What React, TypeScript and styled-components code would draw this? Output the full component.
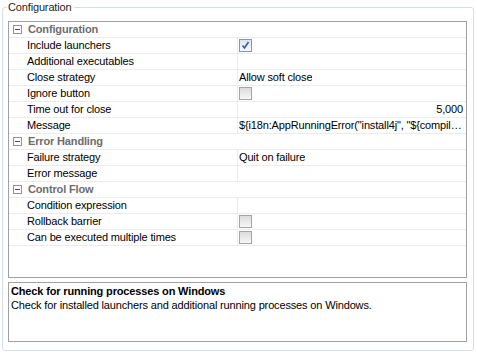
import React from 'react';
import styled, {createGlobalStyle} from "styled-components";

type Row =
    | {kind: 'group', label: string}
    | {kind: 'prop', label: string, value?: string, check?: boolean, align?: 'right'};

const rows: Row[] = [
    {kind: 'group', label: 'Configuration'},
    {kind: 'prop', label: 'Include launchers', check: true},
    {kind: 'prop', label: 'Additional executables'},
    {kind: 'prop', label: 'Close strategy', value: 'Allow soft close'},
    {kind: 'prop', label: 'Ignore button', check: false},
    {kind: 'prop', label: 'Time out for close', value: '5,000', align: 'right'},
    {kind: 'prop', label: 'Message', value: '${i18n:AppRunningError("install4j", "${compiler:sys.fullName}")}'},
    {kind: 'group', label: 'Error Handling'},
    {kind: 'prop', label: 'Failure strategy', value: 'Quit on failure'},
    {kind: 'prop', label: 'Error message'},
    {kind: 'group', label: 'Control Flow'},
    {kind: 'prop', label: 'Condition expression'},
    {kind: 'prop', label: 'Rollback barrier', check: false},
    {kind: 'prop', label: 'Can be executed multiple times', check: false},
];

export default function App() {
    return (
        <>
            <GlobalStyle/>
            <GroupBox>
                <Legend>Configuration</Legend>
                <Table>
                    {rows.map((r, i) => r.kind === 'group' ? (
                        <GroupRow key={i}>
                            <Toggle/>
                            <GroupLabel>{r.label}</GroupLabel>
                        </GroupRow>
                    ) : (
                        <PropRow key={i}>
                            <NameCell>{r.label}</NameCell>
                            <ValueCell $align={r.align}>
                                {r.check !== undefined
                                    ? <CheckBox $checked={r.check}>
                                        {r.check && (
                                            <svg width="9" height="9" viewBox="0 0 9 9">
                                                <path d="M1.5 4.5 L3.5 7 L7.5 1" fill="none" stroke="#3a5a9c" strokeWidth="1.6"/>
                                            </svg>
                                        )}
                                    </CheckBox>
                                    : <ValueText>{r.value}</ValueText>}
                            </ValueCell>
                        </PropRow>
                    ))}
                </Table>
                <Description>
                    <DescTitle>Check for running processes on Windows</DescTitle>
                    <DescText>Check for installed launchers and additional running processes on Windows.</DescText>
                </Description>
            </GroupBox>
        </>
    );
}

const GlobalStyle = createGlobalStyle`
    html, body {
        margin: 0;
        background: #ffffff;
        font-family: "Liberation Sans", Arial, sans-serif;
        font-size: 11px;
        letter-spacing: -0.15px;
        color: #000;
    }
`

const GroupBox = styled.fieldset`
    margin: 0 0 0 2px;
    width: 471px;
    box-sizing: border-box;
    border: 1px solid #d5dfe5;
    border-radius: 3px;
    padding: 7px 6px 8px 5px;
    display: flex;
    flex-direction: column;
    gap: 4px;
`

const Legend = styled.legend`
    padding: 0 3px 0 1px;
    margin-left: -1px;
    color: #1e1e1e;
    font-size: 11px;
    line-height: 14px;
`

const Table = styled.div`
    height: 257px;
    border: 1px solid #a0a0a0;
    box-sizing: border-box;
    width: 459px;
    display: flex;
    flex-direction: column;
`

const GroupRow = styled.div`
    height: 16px;
    box-sizing: border-box;
    border-bottom: 1px solid #ececec;
    display: flex;
    align-items: center;
    padding-left: 4px;
    gap: 6px;
`

const Toggle = styled.span`
    width: 9px;
    height: 9px;
    box-sizing: border-box;
    border: 1px solid #929292;
    position: relative;

    &::before {
        content: '';
        position: absolute;
        left: 1px;
        right: 1px;
        top: 3px;
        height: 1px;
        background: #4e4e4e;
    }
`

const GroupLabel = styled.span`
    font-weight: 700;
    color: #6d6d6d;
    line-height: 15px;
`

const PropRow = styled.div`
    height: 16px;
    box-sizing: border-box;
    border-bottom: 1px solid #ececec;
    display: grid;
    grid-template-columns: 229px 1fr;
`

const NameCell = styled.div`
    padding-left: 18px;
    line-height: 15px;
    white-space: nowrap;
    border-right: 1px solid #ececec;
`

const ValueCell = styled.div<{ $align?: 'right' }>`
    display: flex;
    align-items: center;
    justify-content: ${p => p.$align === 'right' ? 'flex-end' : 'flex-start'};
    padding: 0 3px 0 1px;
    min-width: 0;
    overflow: hidden;
`

const ValueText = styled.span`
    line-height: 15px;
    white-space: nowrap;
    overflow: hidden;
    text-overflow: ellipsis;
`

const CheckBox = styled.span<{ $checked: boolean }>`
    width: 13px;
    height: 13px;
    box-sizing: border-box;
    border: 1px solid ${p => p.$checked ? '#8596b8' : '#a4a4a4'};
    background: ${p => p.$checked ? 'linear-gradient(#dfe5ef, #f7f9fc)' : 'linear-gradient(#dcdcdc, #f7f7f7)'};
    display: flex;
    align-items: center;
    justify-content: center;
`

const Description = styled.div`
    height: 60px;
    width: 459px;
    box-sizing: border-box;
    border: 1px solid #a0a0a0;
    padding: 1px 2px;
`

const DescTitle = styled.div`
    font-weight: 700;
    line-height: 14px;
`

const DescText = styled.div`
    line-height: 14px;
`
